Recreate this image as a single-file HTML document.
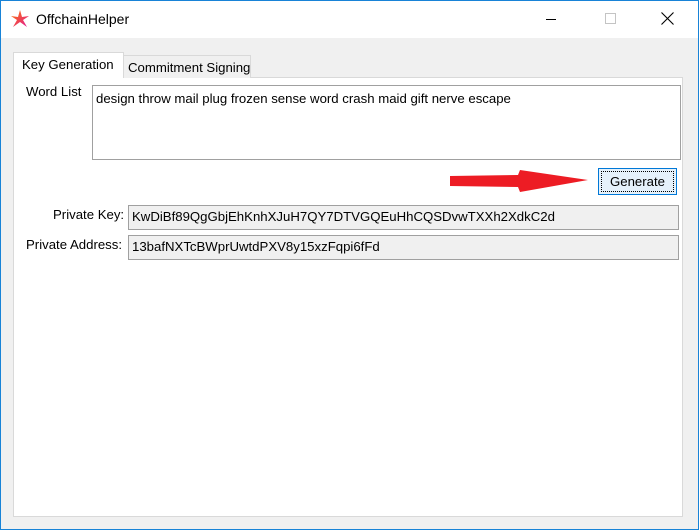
<!DOCTYPE html>
<html><head><style>
*{margin:0;padding:0;box-sizing:border-box}
body{width:699px;height:530px;position:relative;overflow:hidden;background:#f0f0f0;font-family:"Liberation Sans",sans-serif;font-size:13.2px;color:#000}
.a{position:absolute;white-space:nowrap}
.tb{border:1px solid #a0a0a0;background:#f0f0f0;padding:3px 0 0 3px}
</style></head><body>
<div class="a" style="left:0;top:0;width:699px;height:530px;border:1px solid #1883d7"></div>
<div class="a" style="left:1px;top:1px;width:697px;height:37px;background:#fff"></div>
<svg class="a" style="left:10px;top:9px" width="20" height="20" viewBox="0 0 20 20"><defs><linearGradient id="g" x1="0" y1="0" x2="1" y2="1"><stop offset="0" stop-color="#ff7a00"/><stop offset="1" stop-color="#e0159a"/></linearGradient></defs><path d="M10 1 L12 8 L19 7 L13 11 L17 18 L10 13 L3 18 L7 11 L1 7 L8 8 Z" fill="url(#g)"/></svg>
<div class="a" style="left:36px;top:11px;font-size:14px">OffchainHelper</div>
<div class="a" style="left:546px;top:19px;width:10px;height:1px;background:#000"></div>
<div class="a" style="left:605px;top:13px;width:11px;height:11px;border:1px solid #c4c4c4"></div>
<svg class="a" style="left:661px;top:12px" width="13" height="13"><path d="M0.5 0.5L12.5 12.5M12.5 0.5L0.5 12.5" stroke="#000" stroke-width="1.1"/></svg>
<div class="a" style="left:13px;top:77px;width:670px;height:440px;background:#fff;border:1px solid #d9d9d9"></div>
<div class="a" style="left:123px;top:55px;width:128px;height:23px;background:#f0f0f0;border:1px solid #d9d9d9;border-bottom:none;padding:4px 0 0 4px">Commitment Signing</div>
<div class="a" style="left:13px;top:52px;width:111px;height:26px;background:#fff;border:1px solid #d9d9d9;border-bottom:none;padding:4px 0 0 8px">Key Generation</div>
<div class="a" style="left:26px;top:84px">Word List</div>
<div class="a" style="left:92px;top:85px;width:589px;height:75px;border:1px solid #a0a0a0;background:#fff;padding:5px 0 0 3px">design throw mail plug frozen sense word crash maid gift nerve escape</div>
<svg class="a" style="left:448px;top:168px" width="145" height="27"><path d="M2 8 L70 7 L72 2 L140 12 L72 24 L70 19 L2 18 Z" fill="#ed1c24"/></svg>
<div class="a" style="left:598px;top:168px;width:79px;height:27px;border:1px solid #0078d7;background:#e5f1fb;padding:2px"><div style="width:100%;height:100%;border:1px dotted #000;text-align:center;line-height:19px">Generate</div></div>
<div class="a" style="left:53px;top:207px">Private Key:</div>
<div class="a tb" style="left:128px;top:205px;width:551px;height:25px">KwDiBf89QgGbjEhKnhXJuH7QY7DTVGQEuHhCQSDvwTXXh2XdkC2d</div>
<div class="a" style="left:26px;top:237px">Private Address:</div>
<div class="a tb" style="left:128px;top:235px;width:551px;height:25px">13bafNXTcBWprUwtdPXV8y15xzFqpi6fFd</div>
</body></html>
